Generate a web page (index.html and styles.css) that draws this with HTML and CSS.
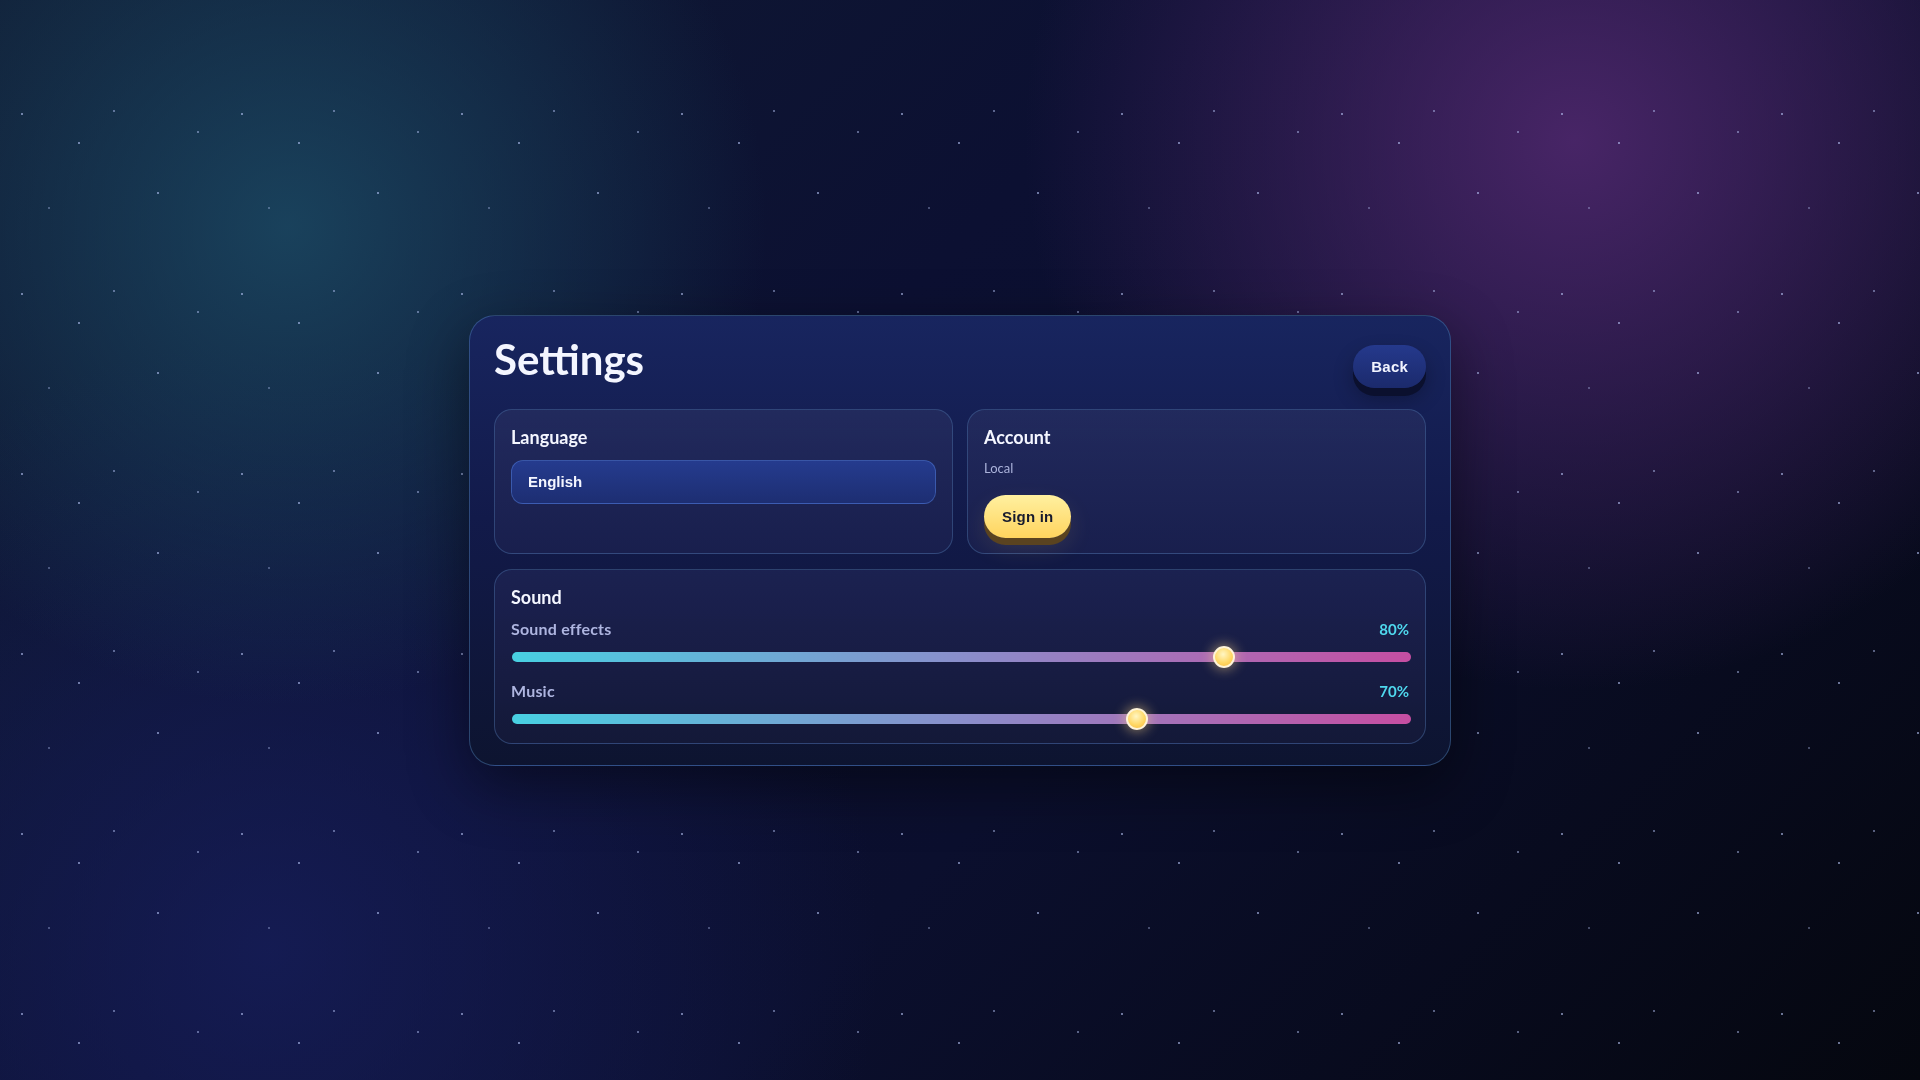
FILE: index.html
```html
<!DOCTYPE html>
<html lang="en">
<head>
    <meta charset="UTF-8">
    <meta name="viewport" content="width=device-width, initial-scale=1.0">
    <title>Settings</title>
    <link rel="stylesheet" href="styles.css">
</head>
<body>
    <div class="panel">
        <div class="panel-head">
            <h1>Settings</h1>
            <button class="btn btn-blue">Back</button>
        </div>

        <div class="cards">
            <div class="card">
                <h2>Language</h2>
                <div class="select">English</div>
            </div>
            <div class="card">
                <h2>Account</h2>
                <div class="muted">Local</div>
                <button class="btn btn-gold">Sign in</button>
            </div>
        </div>

        <!-- Громкость -->
        <div class="card sound">
            <h2>Sound</h2>
            <div class="slider-row">
                <div class="slider-head">
                    <span>Sound effects</span>
                    <span class="pct">80%</span>
                </div>
                <div class="slider">
                    <div class="track"></div>
                    <div class="rail"><span class="thumb" style="left: 80%"></span></div>
                </div>
            </div>
            <div class="slider-row">
                <div class="slider-head">
                    <span>Music</span>
                    <span class="pct">70%</span>
                </div>
                <div class="slider">
                    <div class="track"></div>
                    <div class="rail"><span class="thumb" style="left: 70%"></span></div>
                </div>
            </div>
        </div>
    </div>
</body>
</html>
```
FILE: styles.css
```css
body {
    margin: 0;
    height: 100vh;
    display: flex;
    align-items: center;
    justify-content: center;
    font-family: 'Lato', 'Noto Sans', sans-serif;
    color: #f4f6ff;
    overflow: hidden;
    position: relative;
    background-color: #0b0f2e;
    background-image:
        radial-gradient(circle at 15% 21%, rgba(28, 76, 102, 0.8) 0, transparent 26%),
        radial-gradient(circle at 82% 13%, rgba(80, 40, 110, 0.88) 0, transparent 30%),
        radial-gradient(circle at 14% 88%, rgba(24, 32, 96, 0.7) 0, transparent 32%),
        linear-gradient(135deg, #101c34 0%, #0c1032 40%, #0b0f2e 60%, #05070f 100%);
}

/* звёзды */
body::before {
    content: "";
    position: fixed;
    top: 96px;
    left: 0;
    right: 0;
    bottom: 0;
    pointer-events: none;
    background-image:
        radial-gradient(circle at 22px 18px, rgba(190, 205, 255, 0.55) 0.8px, transparent 1.4px),
        radial-gradient(circle at 114px 15px, rgba(190, 205, 255, 0.45) 0.7px, transparent 1.3px),
        radial-gradient(circle at 79px 47px, rgba(190, 205, 255, 0.55) 0.8px, transparent 1.4px),
        radial-gradient(circle at 198px 36px, rgba(190, 205, 255, 0.45) 0.8px, transparent 1.4px),
        radial-gradient(circle at 158px 97px, rgba(190, 205, 255, 0.55) 0.8px, transparent 1.4px),
        radial-gradient(circle at 49px 112px, rgba(190, 205, 255, 0.4) 0.6px, transparent 1.2px);
    background-size: 220px 180px;
}

.panel {
    position: relative;
    z-index: 1;
    width: 932px;
    padding: 20px 24px 21px;
    border-radius: 26px;
    border: 1px solid rgba(80, 130, 185, 0.45);
    background: linear-gradient(180deg, #18255f 0%, #121a4a 45%, #0d1430 100%);
    box-shadow: 0 20px 60px rgba(0, 0, 0, 0.45);
}

.panel-head {
    display: flex;
    align-items: center;
    justify-content: space-between;
    height: 59px;
    margin-bottom: 14px;
}
.panel-head h1 {
    margin: -12px 0 0;
    font-size: 42px;
    font-weight: 700;
    line-height: 1;
}

.btn {
    border: 0;
    cursor: pointer;
    font-family: 'Liberation Sans', Arial, sans-serif;
    font-weight: 700;
    font-size: 15px;
    height: 43px;
    padding: 0 18px;
    border-radius: 22px;
    letter-spacing: 0.2px;
}
.btn-blue {
    color: #f2f4ff;
    margin-top: 2px;
    background: linear-gradient(180deg, #25398c, #1b2a6c);
    box-shadow: 0 8px 0 #0b102e, 0 10px 20px rgba(0, 0, 0, 0.3);
}
.btn-gold {
    color: #161a2e;
    align-self: flex-start;
    background: linear-gradient(180deg, #fff0a0, #ffd45e);
    box-shadow: 0 7px 0 #5a4320, 0 10px 24px rgba(255, 210, 100, 0.12);
}

.cards {
    display: grid;
    grid-template-columns: 1fr 1fr;
    gap: 14px;
}

.card {
    display: flex;
    flex-direction: column;
    padding: 16px 16px 15px;
    border-radius: 18px;
    border: 1px solid rgba(70, 105, 160, 0.5);
    background: linear-gradient(180deg, rgba(38, 46, 96, 0.75), rgba(28, 34, 80, 0.7));
}
.card h2 {
    margin: 0;
    font-size: 18px;
    font-weight: 700;
    line-height: 22px;
}

.select {
    margin-top: 12px;
    height: 42px;
    line-height: 42px;
    padding: 0 16px;
    border-radius: 12px;
    border: 1px solid rgba(80, 120, 210, 0.55);
    background: linear-gradient(180deg, #253b8e, #1d2e72);
    font-family: 'Liberation Sans', Arial, sans-serif;
    font-weight: 700;
    font-size: 15px;
}

.muted {
    margin: 12px 0 19px;
    font-size: 13px;
    line-height: 16px;
    color: #aab2da;
}

.sound {
    margin-top: 15px;
    padding-bottom: 13px;
    background: linear-gradient(180deg, rgba(30, 36, 84, 0.8), rgba(22, 26, 58, 0.8));
}
.slider-row {
    margin-top: 12px;
}
.slider-row + .slider-row {
    margin-top: 14px;
}
.slider-head {
    display: flex;
    justify-content: space-between;
    font-size: 16px;
    font-weight: 700;
    line-height: 18px;
    letter-spacing: 0.2px;
    color: #aeb5e0;
}
.slider-head .pct {
    font-size: 15px;
    letter-spacing: 0;
    color: #4fd8ee;
}

.slider {
    position: relative;
    height: 22px;
    margin-top: 8px;
    display: flex;
    align-items: center;
}
.track {
    flex: 1;
    height: 10px;
    margin: 0 -2px 0 1px;
    border-radius: 5px;
    background: linear-gradient(90deg, #48d0e2 0%, #8a8ecb 50%, #c64ea2 100%);
}
.rail {
    position: absolute;
    top: 0;
    bottom: 0;
    left: 20px;
    right: 12px;
}
.thumb {
    position: absolute;
    top: 0;
    width: 18px;
    height: 18px;
    margin-left: -11px;
    border-radius: 50%;
    border: 2px solid #fff4d8;
    background: radial-gradient(circle at 45% 35%, #fff6c4 0%, #ffd866 55%, #f7b838 100%);
    box-shadow: 0 0 12px 2px rgba(255, 214, 130, 0.45);
}
```
